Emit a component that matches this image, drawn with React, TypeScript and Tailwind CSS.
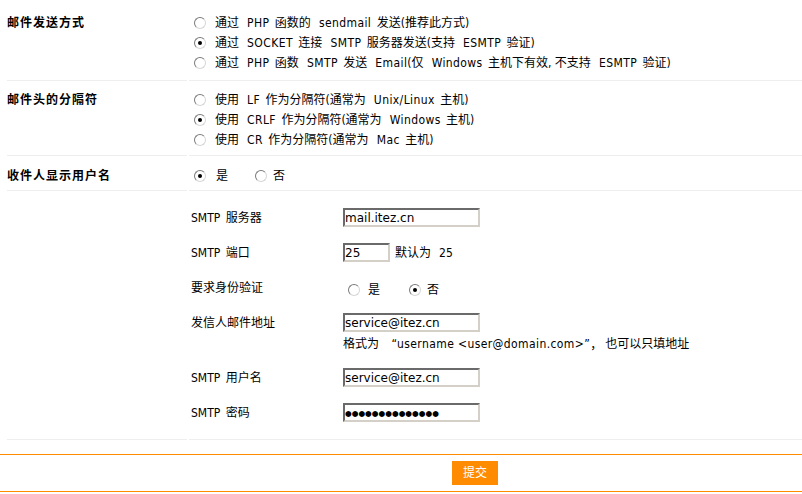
import React from "react";

function Radio({ checked }: { checked?: boolean }) {
  return (
    <span className="inline-flex w-[12px] h-[12px] shrink-0 items-center justify-center rounded-full border border-t-[#7a7a7a] border-l-[#7a7a7a] border-b-[#d6d6d6] border-r-[#d6d6d6] bg-white">
      {checked && <span className="w-[4px] h-[4px] rounded-full bg-black" />}
    </span>
  );
}

function RadioLine({ checked, children }: { checked?: boolean; children: React.ReactNode }) {
  return (
    <div className="flex items-center h-[20px] whitespace-nowrap">
      <span className="ml-[5px] mr-[9px] flex">
        <Radio checked={checked} />
      </span>
      <span>{children}</span>
    </div>
  );
}

function L({ children }: { children: React.ReactNode }) {
  return <span className="tracking-[0.4px]">{children}</span>;
}

const A = "\u2002\u2005"; // CJK -> Latin gap
const B = "\u2002"; // Latin -> CJK gap

const inputCls =
  "block w-[137px] h-[19px] border-2 border-t-[#6a6a6a] border-l-[#6a6a6a] border-b-[#d4d0c8] border-r-[#d4d0c8] bg-white px-[0px] text-[12px] leading-[15px] text-black outline-none [font-family:'DejaVu_Sans',sans-serif]";

function FieldRow({ label, children, pb = "pb-[8px]" }: { label: string; children: React.ReactNode; pb?: string }) {
  return (
    <div className={`flex pt-[8px] ${pb}`}>
      <div className="w-[152px] shrink-0 h-[19px] flex items-center whitespace-nowrap">{label}</div>
      <div className="flex flex-col">{children}</div>
    </div>
  );
}

export default function App() {
  return (
    <div className="w-full h-[494px] overflow-hidden bg-white text-black text-[12px] leading-[20px] [font-family:'DejaVu_Sans_Condensed','Noto_Sans_CJK_SC',sans-serif]">
      <div className="w-[950px]">
        <div className="pl-[7px] flex flex-col">
          {/* Row 1 */}
          <div className="flex gap-[2px]">
            <div className="w-[180px] shrink-0 border-b border-[#eeeeee] pt-[13px] pb-[7px] font-bold tracking-[1px]">
              <div className="h-[20px] flex items-center">邮件发送方式</div>
            </div>
            <div className="flex-1 border-b border-[#eeeeee] pt-[13px] pb-[7px]">
              <RadioLine>
                通过{A}<L>PHP</L>{B}函数的{A}<L>sendmail</L>{B}发送(推荐此方式)
              </RadioLine>
              <RadioLine checked>
                通过{A}<L>SOCKET</L>{B}连接{A}<L>SMTP</L>{B}服务器发送(支持{A}<L>ESMTP</L>{B}验证)
              </RadioLine>
              <RadioLine>
                通过{A}<L>PHP</L>{B}函数{A}<L>SMTP</L>{B}发送{A}<L>Email</L>(仅{A}<L>Windows</L>{B}主机下有效, 不支持{A}<L>ESMTP</L>{B}验证)
              </RadioLine>
            </div>
          </div>

          {/* Row 2 */}
          <div className="flex gap-[2px]">
            <div className="w-[180px] shrink-0 border-b border-[#eeeeee] pt-[9px] pb-[5px] font-bold tracking-[1px]">
              <div className="h-[20px] flex items-center">邮件头的分隔符</div>
            </div>
            <div className="flex-1 border-b border-[#eeeeee] pt-[9px] pb-[5px]">
              <RadioLine>
                使用{A}<L>LF</L>{B}作为分隔符(通常为{A}<L>Unix/Linux</L>{B}主机)
              </RadioLine>
              <RadioLine checked>
                使用{A}<L>CRLF</L>{B}作为分隔符(通常为{A}<L>Windows</L>{B}主机)
              </RadioLine>
              <RadioLine>
                使用{A}<L>CR</L>{B}作为分隔符(通常为{A}<L>Mac</L>{B}主机)
              </RadioLine>
            </div>
          </div>

          {/* Row 3 */}
          <div className="flex gap-[2px]">
            <div className="w-[180px] shrink-0 border-b border-[#eeeeee] pt-[10px] pb-[4px] font-bold tracking-[1px]">
              <div className="h-[20px] flex items-center">收件人显示用户名</div>
            </div>
            <div className="flex-1 border-b border-[#eeeeee] pt-[10px] pb-[4px]">
              <div className="flex items-center h-[20px]">
                <span className="ml-[5px] mr-[10px] flex">
                  <Radio checked />
                </span>
                <span>是</span>
                <span className="ml-[27px] mr-[6px] flex">
                  <Radio />
                </span>
                <span>否</span>
              </div>
            </div>
          </div>

          {/* Row 4: SMTP settings */}
          <div className="flex gap-[2px]">
            <div className="w-[180px] shrink-0 border-b border-[#eeeeee]" />
            <div className="flex-1 border-b border-[#eeeeee] pt-[9px] pb-[9px] pl-[2px]">
              <FieldRow label={`SMTP${B}服务器`}>
                <input readOnly defaultValue="mail.itez.cn" className={inputCls} />
              </FieldRow>
              <FieldRow label={`SMTP${B}端口`}>
                <div className="flex items-center h-[19px]">
                  <input readOnly defaultValue="25" className={inputCls + " !w-[47px]"} />
                  <span className="ml-[5px] whitespace-nowrap">默认为{A}25</span>
                </div>
              </FieldRow>
              <FieldRow label="要求身份验证">
                <div className="flex items-center h-[19px] translate-y-[2px]">
                  <span className="ml-[5px] mr-[8px] flex">
                    <Radio />
                  </span>
                  <span>是</span>
                  <span className="ml-[29px] mr-[6px] flex">
                    <Radio checked />
                  </span>
                  <span>否</span>
                </div>
              </FieldRow>
              <FieldRow label="发信人邮件地址" pb="pb-[7px]">
                <input readOnly defaultValue="service@itez.cn" className={inputCls} />
                <div className="mt-[3px] h-[18px] flex items-center whitespace-nowrap">
                  <span>格式为</span>
                  <span className="w-[18px] text-right">“</span>
                  <span className="tracking-[0.4px]">username &lt;user@domain.com&gt;</span>
                  <span className="w-[6px] text-left">”</span>
                  <span className="w-[15px] text-left [font-family:'Noto_Sans_CJK_SC',sans-serif]">，</span>
                  <span>也可以只填地址</span>
                </div>
              </FieldRow>
              <FieldRow label={`SMTP${B}用户名`}>
                <input readOnly defaultValue="service@itez.cn" className={inputCls} />
              </FieldRow>
              <FieldRow label={`SMTP${B}密码`}>
                <div className={inputCls + " flex items-center overflow-hidden"}>
                  <span className="text-[7.7px] leading-[10px] mt-[2px] [font-family:'DejaVu_Sans',sans-serif]">●●●●●●●●●●●●●●</span>
                </div>
              </FieldRow>
            </div>
          </div>
        </div>

        {/* Submit bar */}
        <div className="mt-[14px] border-t border-b border-[#ff8c00] flex justify-center pt-[6px] pb-[6px]">
          <button type="button" className="w-[46px] h-[24px] bg-[#ff8c00] text-white text-[12px] leading-[24px]">
            提交
          </button>
        </div>
      </div>
    </div>
  );
}
